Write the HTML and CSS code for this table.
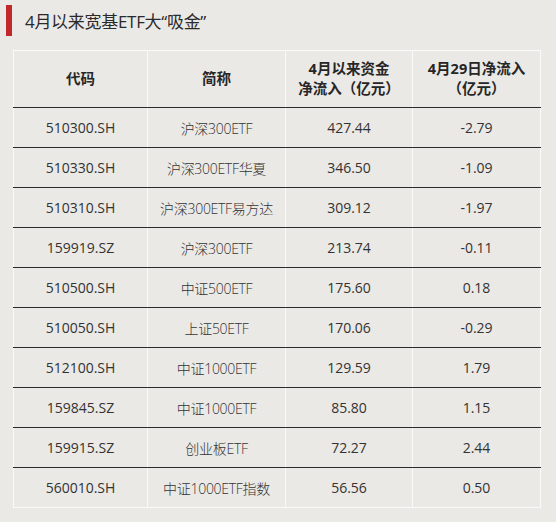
FILE: index.html
```html
<!DOCTYPE html>
<html lang="zh">
<head>
<meta charset="utf-8">
<link rel="stylesheet" href="styles.css">
</head>
<body>
<div class="page">
  <div class="title"><span class="bar"></span><span class="title-text">4月以来宽基ETF大“吸金”</span></div>
  <table class="data">
    <colgroup>
      <col class="c1"><col class="c2"><col class="c3"><col class="c4">
    </colgroup>
    <thead>
      <tr><th>代码</th><th>简称</th><th>4月以来资金<br>净流入（亿元）</th><th>4月29日净流入<br>（亿元）</th></tr>
    </thead>
    <tbody>
      <tr><td>510300.SH</td><td class="nm">沪深300ETF</td><td>427.44</td><td>-2.79</td></tr>
      <tr><td>510330.SH</td><td class="nm">沪深300ETF华夏</td><td>346.50</td><td>-1.09</td></tr>
      <tr><td>510310.SH</td><td class="nm">沪深300ETF易方达</td><td>309.12</td><td>-1.97</td></tr>
      <tr><td>159919.SZ</td><td class="nm">沪深300ETF</td><td>213.74</td><td>-0.11</td></tr>
      <tr><td>510500.SH</td><td class="nm">中证500ETF</td><td>175.60</td><td>0.18</td></tr>
      <tr><td>510050.SH</td><td class="nm">上证50ETF</td><td>170.06</td><td>-0.29</td></tr>
      <tr><td>512100.SH</td><td class="nm">中证1000ETF</td><td>129.59</td><td>1.79</td></tr>
      <tr><td>159845.SZ</td><td class="nm">中证1000ETF</td><td>85.80</td><td>1.15</td></tr>
      <tr><td>159915.SZ</td><td class="nm">创业板ETF</td><td>72.27</td><td>2.44</td></tr>
      <tr><td>560010.SH</td><td class="nm">中证1000ETF指数</td><td>56.56</td><td>0.50</td></tr>
    </tbody>
  </table>
</div>
</body>
</html>
```
FILE: styles.css
```css
html, body {
  margin: 0;
  padding: 0;
  background: #ebe9e6;
}
.page {
  width: 556px;
  height: 522px;
  background: #ebe9e6;
  padding: 5px 0 0 0;
  box-sizing: border-box;
  font-family: "Open Sans", "Noto Sans CJK SC", sans-serif;
  color: #333;
  overflow: hidden;
}
.title {
  display: flex;
  align-items: center;
  height: 31px;
  padding-left: 6px;
}
.bar {
  width: 6px;
  height: 31px;
  background: #c0282b;
}
.title-text {
  margin-left: 13px;
  font-size: 17px;
  color: #2a2a2a;
  letter-spacing: -0.3px;
}
.data {
  margin: 14px 0 0 13px;
  border-collapse: collapse;
  table-layout: fixed;
  width: 527px;
  font-size: 14px;
  color: #333;
}
.c1 { width: 134px; }
.c2 { width: 138px; }
.c3 { width: 127px; }
.c4 { width: 128px; }
.data th, .data td {
  text-align: center;
  border-left: 1px solid #fbfaf8;
  border-right: 1px solid #fbfaf8;
  padding: 0;
}
.data th {
  height: 56px;
  font-weight: bold;
  line-height: 20px;
  border-top: 1px solid #fbfaf8;
  border-bottom: 1px solid #2a2a2a;
  font-size: 14.5px;
  color: #262626;
}
.data td {
  height: 39px;
  border-bottom: 1px solid #2a2a2a;
}
.data tbody tr:last-child td {
  border-bottom: 1px solid #fbfaf8;
}
.data td.nm {
  font-weight: 300;
  letter-spacing: -0.3px;
}
```
